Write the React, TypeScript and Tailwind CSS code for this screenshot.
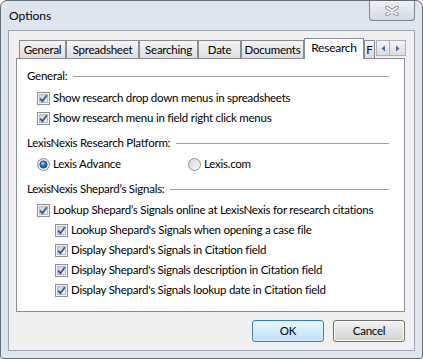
import { useId } from "react";

const TABS = [
  { label: "General", cls: "w-[47px]" },
  { label: "Spreadsheet", cls: "w-[73px]" },
  { label: "Searching", cls: "w-[59px]" },
  { label: "Date", cls: "w-[43px]" },
  { label: "Documents", cls: "w-[63px]" },
  { label: "Research", cls: "w-[60px]", active: true },
  { label: "F", cls: "w-[11px]" },
];

function CheckBox() {
  const id = useId();
  return (
    <svg width="13" height="13" viewBox="0 0 13 13" className="shrink-0">
      <defs>
        <linearGradient id={id} x1="0" y1="0" x2="1" y2="1">
          <stop offset="0" stopColor="#c9cdd3" />
          <stop offset="1" stopColor="#f7f7f7" />
        </linearGradient>
      </defs>
      <rect x="0.5" y="0.5" width="12" height="12" fill="#f4f4f4" stroke="#8e8f8f" />
      <rect x="2.5" y="2.5" width="8" height="8" fill={`url(#${id})`} stroke="#b8bdc5" />
      <path d="M3.2 6.6 L5.4 9.2 L9.8 3.2" fill="none" stroke="#3a5499" strokeWidth="1.8" />
    </svg>
  );
}

function Radio({ on }: { on?: boolean }) {
  const id = useId();
  return (
    <svg width="13" height="13" viewBox="0 0 13 13" className="shrink-0">
      <defs>
        <linearGradient id={`${id}a`} x1="0" y1="0" x2="1" y2="1">
          <stop offset="0" stopColor="#d4d6d9" />
          <stop offset="1" stopColor="#fbfbfb" />
        </linearGradient>
        <radialGradient id={`${id}b`} cx="0.4" cy="0.35" r="0.7">
          <stop offset="0" stopColor="#a8dcf8" />
          <stop offset="0.45" stopColor="#2b7fcc" />
          <stop offset="1" stopColor="#0f3d78" />
        </radialGradient>
      </defs>
      <circle cx="6.5" cy="6.5" r="6" fill={`url(#${id}a)`} stroke="#8e8f8f" />
      {on && <circle cx="6.5" cy="6.5" r="3.6" fill={`url(#${id}b)`} stroke="#1c3e6e" strokeWidth="0.8" />}
    </svg>
  );
}

function Header({ text }: { text: string }) {
  return (
    <div className="flex h-[20px] items-center gap-[6px] pl-[10px] pr-[15px]">
      <span className="whitespace-nowrap">{text}</span>
      <div className="h-px flex-1 bg-[#a0a0a0]" />
    </div>
  );
}

function CheckRow({ text, sub }: { text: string; sub?: boolean }) {
  return (
    <div className={`flex h-[20px] items-center gap-[3px] ${sub ? "pl-[38px]" : "pl-[20px]"}`}>
      <CheckBox />
      <span className="whitespace-nowrap">{text}</span>
    </div>
  );
}

export default function App() {
  return (
    <div className="h-[359px] w-[423px] bg-white font-['Lato',sans-serif] text-[11.5px] tracking-[-0.25px] text-black">
      <div className="flex h-full w-full flex-col rounded-t-[7px] rounded-b-[3px] border border-[#5f6b78] bg-[#dfe5ec] px-[7px] pb-[7px]">
        {/* Title bar */}
        <div className="flex h-[29px] items-start justify-between">
          <span className="pl-[1px] pt-[7px] text-[12px] leading-[16px] tracking-normal">Options</span>
          <div className="flex h-[20px] w-[46px] items-center justify-center rounded-b-[4px] border border-t-0 border-[#7b8796] bg-linear-to-b from-[#eef1f5] to-[#d4dae2]">
            <svg width="14" height="10" viewBox="0 0 14 10">
              <path d="M2 1.5 L12 8.5 M12 1.5 L2 8.5" stroke="#8a9099" strokeWidth="3.6" strokeLinecap="round" />
              <path d="M2 1.5 L12 8.5 M12 1.5 L2 8.5" stroke="#ffffff" strokeWidth="1.6" strokeLinecap="round" />
            </svg>
          </div>
        </div>

        {/* Client area */}
        <div className="flex flex-1 flex-col border border-[#9aa5b1] bg-[#f0f0f0] pt-[7px] pr-[9px] pl-[7px]">
          {/* Tab strip */}
          <div className="relative flex h-[20px] items-end pl-[3px]">
            {TABS.map((t) =>
              t.active ? (
                <div
                  key={t.label}
                  className={`relative z-10 -mb-px flex h-[21px] shrink-0 justify-center border border-b-0 border-[#898c95] bg-white pt-[1px] text-[12px] leading-[16px] ${t.cls}`}
                >
                  {t.label}
                </div>
              ) : (
                <div
                  key={t.label}
                  className={`flex h-[18px] shrink-0 justify-center overflow-hidden whitespace-nowrap border border-b-0 border-[#898c95] bg-linear-to-b from-[#f4f4f4] to-[#dedede] pt-[1px] leading-[16px] ${t.cls}`}
                >
                  {t.label}
                </div>
              )
            )}
            <div className="absolute top-[2px] right-[-1px] z-20 flex">
              <div className="flex h-[16px] w-[14px] items-center justify-center border border-[#a9b0ba] bg-linear-to-b from-[#f5f5f5] to-[#dcdcdc]">
                <svg width="5" height="7" viewBox="0 0 5 7">
                  <path d="M4 0.5 L0.5 3.5 L4 6.5 Z" fill="#4f6b9a" />
                </svg>
              </div>
              <div className="flex h-[16px] w-[16px] items-center justify-center border border-l-0 border-[#a9b0ba] bg-linear-to-b from-[#f5f5f5] to-[#dcdcdc]">
                <svg width="5" height="7" viewBox="0 0 5 7">
                  <path d="M1 0.5 L4.5 3.5 L1 6.5 Z" fill="#4f6b9a" />
                </svg>
              </div>
            </div>
          </div>

          {/* Tab panel */}
          <div className="flex h-[254px] flex-col border border-[#898c95] bg-white pt-[7px]">
            <Header text="General:" />
            <div className="mt-[2px]">
              <CheckRow text="Show research drop down menus in spreadsheets" />
              <CheckRow text="Show research menu in field right click menus" />
            </div>
            <div className="mt-[5px]">
              <Header text="LexisNexis Research Platform:" />
            </div>
            <div className="mt-[1px] flex h-[20px] items-center pl-[20px]">
              <div className="flex w-[151px] items-center gap-[3px]">
                <Radio on />
                <span>Lexis Advance</span>
              </div>
              <div className="flex items-center gap-[3px]">
                <Radio />
                <span>Lexis.com</span>
              </div>
            </div>
            <div className="mt-[5px]">
              <Header text="LexisNexis Shepard’s Signals:" />
            </div>
            <div className="mt-[1px]">
              <CheckRow text="Lookup Shepard’s Signals online at LexisNexis for research citations" />
              <CheckRow sub text="Lookup Shepard's Signals when opening a case file" />
              <CheckRow sub text="Display Shepard's Signals in Citation field" />
              <CheckRow sub text="Display Shepard's Signals description in Citation field" />
              <CheckRow sub text="Display Shepard's Signals lookup date in Citation field" />
            </div>
          </div>

          {/* Buttons */}
          <div className="mt-[8px] flex justify-end gap-[9px]">
            <button className="h-[22px] w-[72px] rounded-[3px] border border-[#3c7fb1] bg-linear-to-b from-[#eaf6fd] to-[#bfe1f5] leading-[16px] shadow-[inset_0_0_0_1px_#d6effc]">
              OK
            </button>
            <button className="h-[22px] w-[72px] rounded-[3px] border border-[#707070] bg-linear-to-b from-[#f3f3f3] to-[#d2d2d2] leading-[16px] shadow-[inset_0_0_0_1px_#fcfcfc]">
              Cancel
            </button>
          </div>
        </div>
      </div>
    </div>
  );
}
